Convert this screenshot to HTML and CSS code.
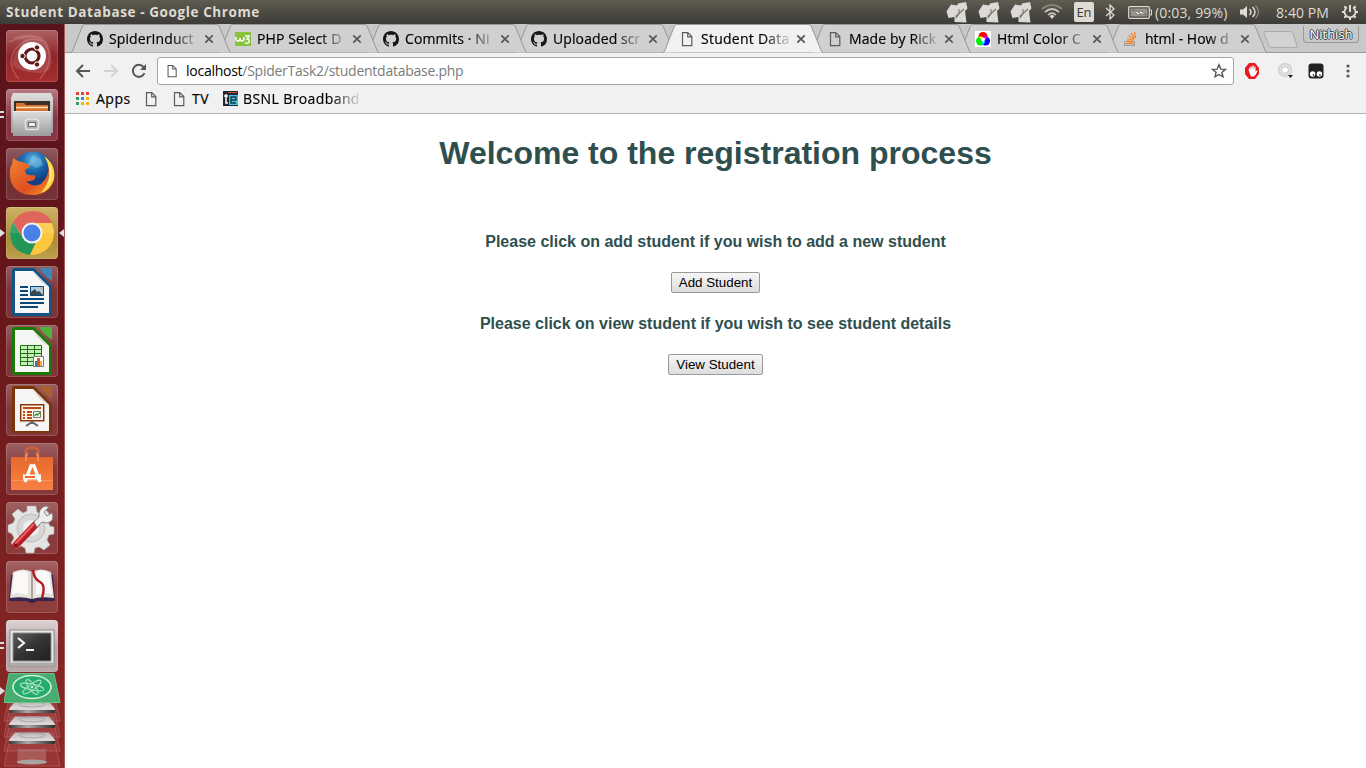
FILE: index.html
```html
<!DOCTYPE html>
<html lang="en">
<head>
<meta charset="utf-8">
<title>Student Database</title>
<link rel="stylesheet" href="styles.css">
</head>
<body>
<svg class="defs" width="0" height="0">
  <defs>
    <symbol id="github" viewBox="0 0 16 16"><path fill="#181616" d="M8 0C3.58 0 0 3.58 0 8c0 3.54 2.29 6.53 5.47 7.59.4.07.55-.17.55-.38 0-.19-.01-.82-.01-1.49-2.01.37-2.53-.49-2.69-.94-.09-.23-.48-.94-.82-1.13-.28-.15-.68-.52-.01-.53.63-.01 1.08.58 1.23.82.72 1.21 1.87.87 2.33.66.07-.52.28-.87.51-1.07-1.78-.2-3.64-.89-3.64-3.95 0-.87.31-1.59.82-2.15-.08-.2-.36-1.02.08-2.12 0 0 .67-.21 2.2.82.64-.18 1.32-.27 2-.27s1.36.09 2 .27c1.53-1.04 2.2-.82 2.2-.82.44 1.1.16 1.92.08 2.12.51.56.82 1.27.82 2.15 0 3.07-1.87 3.75-3.65 3.95.29.25.54.73.54 1.48 0 1.07-.01 1.93-.01 2.2 0 .21.15.46.55.38A8.01 8.01 0 0 0 16 8c0-4.42-3.58-8-8-8z"/></symbol>
    <symbol id="page" viewBox="0 0 16 16"><path fill="none" stroke="#5c5c5c" stroke-width="1.2" d="M3.500 1.600h5.300l4 4v9H3.500zM8.700 1.600v4.200h4"/></symbol>
    <symbol id="shape" viewBox="0 0 160 29"><path d="M0 28.500C1 28.500 1.500 27 2 26L11 3Q12 .500 13.500 .500H146Q147.500 .500 148.500 3L158 26Q159 28.500 160 28.500" stroke="#979797"/></symbol>
    <symbol id="close" viewBox="0 0 10 10"><path d="M1.300 1.300l7.400 7.400M8.700 1.300L1.300 8.700" stroke="#565656" stroke-width="1.700"/></symbol>
    <symbol id="box" viewBox="0 0 22 22"><path fill="#dcdad6" d="M5 3.500L11 4.500 12 2.500 20 1 21.500 7.500 19 10 20.500 21.500 8.500 21V16L2.500 17 .5 10.500Z"/><path d="M9.500 15.500L18 8M13 11.500V8M13.500 12L10 17" fill="none" stroke="#77736c" stroke-width="1.100"/></symbol>
    <linearGradient id="silver" x2="0" y2="1"><stop stop-color="#dedede"/><stop offset="1" stop-color="#9c9c9c"/></linearGradient>
    <linearGradient id="fox" x2="1" y2="1"><stop stop-color="#ef8332"/><stop offset=".6" stop-color="#e0501f"/><stop offset="1" stop-color="#fba02b"/></linearGradient>
    <radialGradient id="globe" cx=".5" cy=".2"><stop stop-color="#66b9e6"/><stop offset=".5" stop-color="#1f6db1"/><stop offset="1" stop-color="#123f85"/></radialGradient>
    <linearGradient id="bag" x2="0" y2="1"><stop stop-color="#e5682f"/><stop offset=".6" stop-color="#f47836"/><stop offset="1" stop-color="#f57f48"/></linearGradient>
    <linearGradient id="dark" x2="1" y2="1"><stop stop-color="#5d5d5d"/><stop offset=".5" stop-color="#333"/><stop offset="1" stop-color="#202020"/></linearGradient>
    <linearGradient id="disk" x2="0" y2="1"><stop stop-color="#b9b4b3"/><stop offset="1" stop-color="#dfdddc"/></linearGradient>
    <linearGradient id="edge"><stop stop-color="#3a3a3a"/><stop offset=".4" stop-color="#a8a8a8"/><stop offset="1" stop-color="#2e2e2e"/></linearGradient>
  </defs>
</svg>

<header class="panel">
  <span class="panel-title">Student Database - Google Chrome</span>
  <div class="indicators">
    <svg class="i-box" width="22" height="22"><use href="#box"/></svg>
    <svg class="i-box" width="22" height="22"><use href="#box"/></svg>
    <svg class="i-box" width="22" height="22"><use href="#box"/></svg>
    <svg class="i-wifi" width="22" height="16" viewBox="0 0 22 16" fill="none" stroke-width="1.700"><path d="M1 5Q11-3 21 5" stroke="#85827a"/><path d="M4 8Q11 2 18 8M7 11Q11 7 15 11" stroke="#c9c6be"/><path d="M8.500 12Q11 10 13.500 12L11 15z" fill="#dfdbd2" stroke="none"/></svg>
    <span class="i-lang">En</span>
    <svg class="i-bt" width="10" height="16" viewBox="0 0 10 16"><path d="M1 4l8 7-4 4V1l4 4-8 7" fill="none" stroke="#dfdbd2" stroke-width="1.300"/></svg>
    <svg class="i-bat" width="24" height="13" viewBox="0 0 24 13"><rect x=".7" y=".7" width="20.600" height="11.600" rx="1" fill="none" stroke="#dfdbd2" stroke-width="1.200"/><path d="M22 4h1.500v5H22" fill="none" stroke="#dfdbd2"/><path fill="#97948c" d="M2.500 2.500h17v8h-17z"/><path fill="#f2efe8" stroke="#47453f" stroke-width=".6" d="M4.500 4l7 2.500 1-2L18 9l-6.500-1.500-1 1.700z"/></svg>
    <span class="i-pct">(0:03, 99%)</span>
    <svg class="i-vol" width="21" height="16" viewBox="0 0 21 16"><path fill="#dfdbd2" d="M0 5.500h3l4-3.500v12l-4-3.500H0z"/><path d="M9.500 5q3 3 0 6M12.500 3q5 5 0 10" fill="none" stroke="#dfdbd2" stroke-width="1.500"/><path d="M15.500 1.500q6 6.500 0 13" fill="none" stroke="#8b8880" stroke-width="1.300"/></svg>
    <span class="i-time">8:40 PM</span>
    <svg class="i-gear" width="18" height="18" viewBox="0 0 18 18" fill="none" stroke="#dfdbd2"><path d="M6 4.200a5.500 5.500 0 1 0 6 0" stroke-width="1.800"/><path d="M9 2v7" stroke-width="2"/><path d="M1 9h2.500M14.500 9H17M3.300 3.300L5 5M13 5l1.700-1.700M3.300 14.700L5 13M13 13l1.700 1.700M9 14.500V17" stroke-width="2"/></svg>
  </div>
</header>

<div class="desktop">
<nav class="launcher">
  <svg class="tile dash" viewBox="0 0 52 52"><path d="M3 12Q28 0 39 13 50 30 34 49M13 49Q-2 32 12 16 24 4 40 13" fill="none" stroke="#e4aaa5" stroke-opacity=".3" stroke-width="1.500"/><path d="M4 8Q38-4 44 20T32 43 8 37 18 10" fill="#d89993" opacity=".25"/><circle cx="26" cy="26" r="14" fill="#fff"/><circle cx="26" cy="26" r="7" fill="none" stroke="#621817" stroke-width="3.200"/><g fill="#621817" stroke="#fff"><circle cx="16.500" cy="26" r="2.700"/><circle cx="31" cy="17.500" r="2.700"/><circle cx="31" cy="34.500" r="2.700"/></g></svg>
  <div class="slot"><svg class="tile files" viewBox="0 0 52 52"><path d="M7 4h38l2 5v35H5V9z" fill="url(#silver)"/><path fill="#3c3028" d="M8 12h36v10H8z"/><path fill="#d8702f" d="M10 14h8l2 2h22v6H10z"/><path d="M10 18.500h32" stroke="#ffe1b4" stroke-width="1.500"/><path d="M7 22h38v25H7z" fill="url(#silver)"/><path d="M7 22.500h38" stroke="#eee"/><rect x="19.500" y="30.500" width="13" height="10" rx="2" fill="#b0b0b0" stroke="#e5e5e5" stroke-width="1.500"/><path d="M22.500 33.500h7v4h-7z" fill="#f2f2f2" stroke="#666"/></svg><i class="dots"></i></div>
  <svg class="tile ff" viewBox="0 0 52 52"><circle cx="27" cy="24" r="20.500" fill="url(#globe)"/><path fill="#8ccbea" opacity=".45" d="M27 7l8 4 2 6-6 3-6-3-4 2z"/><path fill="url(#fox)" d="M7 10Q11 13 16 14L22 16 24 19 19 22 20 26Q24 28 28 27 31 29 28 32 23 34 20 33 26 40 35 36 43 29 43 16 50 23 48 32 44 45 29 47 11 48 5 34 2 23 6 16z"/><path fill="#ffda45" d="M38 8Q50 16 48 31 44 42 35 45 45 33 43 22 42 14 38 8z"/><path fill="#ffef9a" d="M43 16q4 8 2 16l-3 5q3-10 1-21z"/></svg>
  <div class="slot"><svg class="tile chrome" viewBox="0 0 52 52"><circle cx="26" cy="26" r="22" fill="#fbc73d"/><path fill="#dc5044" d="M7 15Q14 4 26 4 40 4 46 16H26L17 31z"/><path fill="#21975a" d="M7 15L17 31Q22 37 30 35L24 48Q5 45 4 27 4 20 7 15z"/><path fill="#fff" opacity=".13" d="M4 26a22 22 0 0 1 44 0z"/><circle cx="26" cy="26" r="10.500" fill="#f4f4f1"/><circle cx="26" cy="26" r="8.500" fill="#4a80e8"/></svg><i class="run-left"></i><i class="run-right"></i></div>
  <svg class="tile" viewBox="0 0 52 52"><path fill="#125488" d="M8 2Q6 2 6 5v42q0 3 3 3h34q3 0 3-3V20L28 2z"/><path fill="#3c86ba" d="M33 2h13v13Q38 10 33 2z"/><path fill="#f7f7f7" d="M9 5h18l16 16v26H9z"/><path fill="#cfd4d8" d="M27 5l16 16Q34 17 27 5z"/><path d="M14 21h8M14 25h8M14 29h8M14 33h24M14 37h24M14 41h18" stroke="#0c4776" stroke-width="2"/><path fill="#a9d0e8" stroke="#0c4776" d="M24.500 20.500h13v9h-13z"/><path fill="#40464a" d="M25 29v-3l4-3 2 3 2-1 4 4z"/><circle cx="35" cy="22.500" r="1.200" fill="#e9b04a"/></svg>
  <svg class="tile" viewBox="0 0 52 52"><path fill="#1a7a08" d="M8 2Q6 2 6 5v42q0 3 3 3h34q3 0 3-3V20L28 2z"/><path fill="#52b03c" d="M33 2h13v13Q38 10 33 2z"/><path fill="#f5f7f4" d="M9 5h18l16 16v26H9z"/><path fill="#cbd4c8" d="M27 5l16 16Q34 17 27 5z"/><path fill="#caecbb" stroke="#16740c" d="M14.500 20.500h21v20h-21zM21.500 20v20M28.500 20v20M14 24.500h22M14 28.500h22M14 32.500h22M14 36.500h22"/><path fill="#fff" stroke="#777" d="M27.500 31.500h10v10h-10z"/><path fill="#377aa6" d="M29 36h2v5h-2z"/><path fill="#df5c18" d="M31 33h3v8h-3z"/><path fill="#e8b43a" d="M34 36h2v5h-2z"/></svg>
  <svg class="tile" viewBox="0 0 52 52"><path fill="#7b3509" d="M8 2Q6 2 6 5v41q0 3 3 3h34q3 0 3-3V20L28 2z"/><path fill="#a8602e" d="M33 2h13v13Q38 10 33 2z"/><path fill="#f7f5f3" d="M9 5h18l16 16v26H9z"/><path fill="#d5cfca" d="M27 5l16 16Q34 17 27 5z"/><path fill="#fff4e9" stroke="#8b360c" stroke-width="1.500" d="M14.700 20.700h23v16h-23z"/><path d="M17 24h18M17 28h2M17 31h2M17 34h2M21 28h5M21 31h5M21 34h5" stroke="#be4a16" stroke-width="2"/><path fill="#edf8e9" stroke="#777" d="M27.500 27.500h7v6h-7z"/><path d="M28.500 32l2-2 1 1 3-3" fill="none" stroke="#39933c" stroke-width="1.300"/><path d="M20 42l6-4 6 4M26 37v3" fill="none" stroke="#666" stroke-width="2"/></svg>
  <svg class="tile" viewBox="0 0 52 52"><path d="M20 16V8q0-3 3-3h6q3 0 3 3v8" fill="none" stroke="#c9603f" stroke-width="2.400"/><path fill="url(#bag)" d="M5 14h42v33H5z"/><path d="M5 37.500h42" stroke="#f99566"/><path d="M20 18v-4q0-3 2-3M32 18v-4q0-3-2-3" fill="none" stroke="#f08c60" stroke-width="2.200"/><path d="M19 39l6-16h3l6 16" fill="none" stroke="#fff" stroke-width="3.300"/><path d="M17 34h18" stroke="#fff" stroke-width="5"/><path d="M19 34h10" stroke="#ed6a2b" stroke-width="2"/></svg>
  <svg class="tile" viewBox="0 0 52 52"><path fill="#e4e4e2" stroke="#aaa" stroke-width=".6" d="M21 4h9l1 6 4 2 5-4 6 7-4 5 2 4 4 1v7l-5 1-2 5 3 5-6 5-5-3-4 1-1 5h-8l-1-5-4-2-5 3-5-6 3-5-2-4-4-2v-7l5-2 2-4-3-5 6-5 5 4 4-2z"/><circle cx="25" cy="26" r="14" fill="#d6d6d4" stroke="#bbb"/><circle cx="25" cy="26" r="8" fill="#eee"/><path d="M10 43L30 22" stroke="#b51f25" stroke-width="7" stroke-linecap="round"/><path d="M9 42L28 22" stroke="#ee6264" stroke-width="2"/><circle cx="10" cy="43" r="1.500" fill="#701014"/><path fill="#eee" stroke="#888" d="M28 20l5-5q-1-8 6-11l4 1-5 5 3 4 5-3q3 8-5 10l-5-1-5 5z"/></svg>
  <svg class="tile" viewBox="0 0 52 52"><path fill="#37234e" d="M5 14L3 40h18q5 4 10 0h18l-2-26z"/><path fill="#e5e2dc" d="M7 11q11-5 19 0 8-5 19 0l3 26q-14-2-22 1-10-3-22-1z"/><path d="M26 11v27" stroke="#a9a59d" stroke-width="2"/><path fill="#fff" opacity=".8" d="M8 12q10-4 14 0v22q-9-3-16-1zM30 11q8-4 13 1l3 21q-8-2-16 1z"/><path d="M27 9q1 9 7 12t2 16" stroke="#b51c25" stroke-width="2.400" fill="none"/></svg>
  <div class="slot"><svg class="tile term" viewBox="0 0 52 52"><path fill="#ebe9e7" stroke="#8c8787" d="M4 10h44v36H4z"/><path fill="url(#dark)" stroke="#888" d="M7 13h38v28H7z"/><path d="M12 18l6 5-6 5M20 30h8" fill="none" stroke="#f3f3f3" stroke-width="2.200"/><path d="M5 44h42" stroke="#aaa" stroke-width="3"/></svg><i class="dots"></i></div>
  <div class="slot stack"><svg width="60" height="96" viewBox="0 0 60 96">
    <g fill="#b7555b" fill-opacity=".28" stroke="#bd7676" stroke-opacity=".5"><path d="M7 60H49L56 93H0z"/><path d="M7 44H49L56 78H0z"/><path d="M7 29H49L56 64H0z"/><path d="M7 17H49L56 48H0z"/></g>
    <path fill="#bc8784" opacity=".45" d="M14 76H42V90H13z"/><ellipse cx="28" cy="89" rx="15" ry="2.500" fill="#a9a3a1"/>
    <g id="drive"><path fill="url(#disk)" d="M11 28.500H45L51 36H5z"/><ellipse cx="28" cy="31.500" rx="13" ry="2.500" fill="none" stroke="#aaa6a5"/><path d="M5 36.700H51" stroke="#f0f0f0"/><path fill="url(#edge)" d="M5 37h46v3H5z"/></g>
    <use href="#drive" y="15"/><use href="#drive" y="31"/>
    <path fill="#48ac6f" stroke="#66c58b" d="M5 .500H50L56 29.500H0z"/><ellipse cx="28" cy="14" rx="19" ry="11.500" fill="#24ad68" stroke="#d4eee0" stroke-width="1.500"/><g fill="none" stroke="#a9dfc2"><ellipse cx="28" cy="14" rx="12" ry="3" transform="rotate(12 28 14)"/><ellipse cx="28" cy="14" rx="9" ry="3" transform="rotate(52 28 14)"/><ellipse cx="28" cy="14" rx="11" ry="3" transform="rotate(-35 28 14)"/></g><circle cx="28" cy="14" r="1.300" fill="#d4eee0"/>
  </svg><i class="run-left"></i></div>
</nav>

<main class="browser">
  <div class="tabs">
    <div class="tab"><svg class="shape"><use href="#shape"/></svg><svg class="fav"><use href="#github"/></svg><span class="name">SpiderInduct</span><svg class="x"><use href="#close"/></svg></div>
    <div class="tab"><svg class="shape"><use href="#shape"/></svg><svg class="fav" viewBox="0 0 16 16"><path fill="#86c440" d="M0 1h16v14H0z"/><path d="M1 6v2q0 2 2 2t2-3q0 3 2 3t2-3V6M10 5h4l-2 3q3 0 2 3-1 2-4 1" fill="none" stroke="#fff" stroke-width="1.500"/></svg><span class="name">PHP Select D</span><svg class="x"><use href="#close"/></svg></div>
    <div class="tab"><svg class="shape"><use href="#shape"/></svg><svg class="fav"><use href="#github"/></svg><span class="name">Commits · Ni</span><svg class="x"><use href="#close"/></svg></div>
    <div class="tab"><svg class="shape"><use href="#shape"/></svg><svg class="fav"><use href="#github"/></svg><span class="name">Uploaded scr</span><svg class="x"><use href="#close"/></svg></div>
    <div class="tab active"><svg class="shape"><use href="#shape"/></svg><svg class="fav"><use href="#page"/></svg><span class="name wide">Student Data</span><svg class="x"><use href="#close"/></svg></div>
    <div class="tab"><svg class="shape"><use href="#shape"/></svg><svg class="fav"><use href="#page"/></svg><span class="name">Made by Rick</span><svg class="x"><use href="#close"/></svg></div>
    <div class="tab"><svg class="shape"><use href="#shape"/></svg><svg class="fav" viewBox="0 0 16 16"><path fill="#fff" d="M0 0h16v16H0z"/><circle cx="8" cy="5.500" r="4.500" fill="red"/><circle cx="5.500" cy="10" r="4.500" fill="#0e0"/><circle cx="10.500" cy="10" r="4.500" fill="#00f"/><path fill="#ff0" d="M3.600 6A4.500 4.500 0 0 1 8 6.500L7 9z"/><path fill="#f0f" d="M8 6.500A4.500 4.500 0 0 1 12.400 6L10 10z"/><path fill="#0ff" d="M8 8l2 3-2 3-2-3z"/><circle cx="8" cy="8.500" r="2" fill="#fff"/></svg><span class="name">Html Color C</span><svg class="x"><use href="#close"/></svg></div>
    <div class="tab"><svg class="shape"><use href="#shape"/></svg><svg class="fav" viewBox="0 0 16 16"><path d="M1.700 10v4.300h9.600V10" fill="none" stroke="#9b9b9b" stroke-width="1.300"/><path d="M3 12.300h7M3.300 10l6.800.8M4 7.500l6.500 2M5.500 4.500l5.500 4M8 2l3.700 5.500M11.500 1l1 6" stroke="#f48024" stroke-width="1.300"/></svg><span class="name how">html - How d</span><svg class="x"><use href="#close"/></svg></div>
    <svg class="newtab" width="36" height="18" viewBox="0 0 36 18"><path d="M3 .500H27q2 0 3 2l4 12q1 2-1 2H9q-2 0-3-2l-5-12q-1-2 2-2z" fill="#d2d2d2" stroke="#aaa"/></svg>
    <span class="user">Nithish</span>
  </div>
  <div class="toolbar">
    <svg class="nav" viewBox="0 0 16 16"><path d="M15 8H2M8 2L2 8l6 6" fill="none" stroke="#565656" stroke-width="2"/></svg>
    <svg class="nav" viewBox="0 0 16 16"><path d="M1 8h13M8 2l6 6-6 6" fill="none" stroke="#d2d2d2" stroke-width="2"/></svg>
    <svg class="nav" viewBox="0 0 16 16"><path d="M13.500 10A6 6 0 1 1 12.500 4" fill="none" stroke="#565656" stroke-width="2"/><path fill="#565656" d="M15 1v6H9z"/></svg>
    <div class="omnibox"><svg width="14" height="14"><use href="#page"/></svg><span class="url"><b>localhost</b>/SpiderTask2/studentdatabase.php</span><svg class="star" width="16" height="16" viewBox="0 0 16 16"><path d="M8 1.800l1.800 4.300 4.600.3-3.500 3 1.100 4.500L8 11.500l-4 2.400 1.100-4.500-3.500-3 4.600-.3z" fill="none" stroke="#555" stroke-width="1.400"/></svg></div>
    <div class="extensions">
      <svg width="16" height="16" viewBox="0 0 16 16"><path fill="#e8191f" d="M5 0h6l4 5v6l-4 5H5l-4-5V5z"/><path fill="#fff" d="M4.500 7l1-3 .8 3V3.500h1.200l.5 3 .3-4h1.200l.3 4 .7-3h1v5l1.500-1.300.7.500-2 4-2 1.800H7z"/></svg>
      <svg width="18" height="16" viewBox="0 0 18 16"><circle cx="9" cy="7" r="6" fill="#f7f7f7" stroke="#d6d6d6" stroke-width="2.500"/><circle cx="9" cy="7" r="3.500" fill="#fff" stroke="#bbb"/><path fill="#222" d="M12 12h5l-2.500 3z"/></svg>
      <svg class="monkey" width="16" height="16" viewBox="0 0 16 16"><rect x=".5" y=".5" width="15" height="15" rx="3" fill="#222"/><circle cx="4.600" cy="11" r="2.700" fill="#fff"/><circle cx="11.400" cy="11" r="2.700" fill="#fff"/><circle cx="5.500" cy="12" r=".8"/><circle cx="12" cy="12" r=".8"/></svg>
      <svg class="more" width="4" height="14" viewBox="0 0 4 14" fill="#565656"><circle cx="2" cy="2" r="1.600"/><circle cx="2" cy="7" r="1.600"/><circle cx="2" cy="12" r="1.600"/></svg>
    </div>
  </div>
  <div class="bookmarks">
    <svg width="13" height="13" viewBox="0 0 13 13"><path fill="#ea4335" d="M0 0h3v3H0zM5 0h3v3H5zM10 0h3v3h-3z"/><path fill="#34a060" d="M0 5h3v3H0zM0 10h3v3H0z"/><path fill="#4285e8" d="M5 5h3v3H5z"/><path fill="#f4b400" d="M10 5h3v3h-3zM5 10h3v3H5zM10 10h3v3h-3z"/></svg>
    <span class="apps">Apps</span>
    <svg class="bm-page" width="16" height="16"><use href="#page"/></svg>
    <svg class="bm-page" width="16" height="16"><use href="#page"/></svg>
    <span class="tv">TV</span>
    <svg class="bm-te" width="15" height="15" viewBox="0 0 15 15"><path fill="#202a30" d="M0 0h15v15H0z"/><path fill="#d44" d="M5 1h9v1H5z"/><path fill="#48c4ec" d="M6 4h9v10H6z"/><path d="M1 5h4M3 3v9h2" stroke="#fff" stroke-width="1.500" fill="none"/><path d="M8 9h5V6H8v6h5" fill="none" stroke="#17333e" stroke-width="1.300"/></svg>
    <span class="bsnl">BSNL Broadband</span>
  </div>
  <section class="content">
    <h1>Welcome to the registration process</h1>
    <h4>Please click on add student if you wish to add a new student</h4>
    <button>Add Student</button>
    <h4>Please click on view student if you wish to see student details</h4>
    <button>View Student</button>
  </section>
</main>
</div>
</body>
</html>
```

FILE: styles.css
```css
* { box-sizing: border-box; }
body { margin: 0; width: 1366px; height: 768px; overflow: hidden; font-family: "Open Sans", "Noto Sans", sans-serif; font-size: 14px; display: flex; flex-direction: column; }
svg { display: block; flex: none; }
span { white-space: nowrap; }
.defs { position: absolute; }
.panel { height: 24px; flex: none; background: linear-gradient(#5e5b50, #3c3b37); color: #dfdbd2; display: flex; align-items: center; justify-content: space-between; padding: 0 7px 0 6px; }
.panel-title { font-weight: 700; font-size: 13.5px; letter-spacing: 0.6px; }
.indicators { display: flex; align-items: center; }
.i-box { margin-right: 10px; }
.i-wifi { margin: 0 11px 0 -1px; }
.i-lang { width: 20px; height: 20px; background: #dfdbd2; color: #3c3b37; border-radius: 2px; text-align: center; line-height: 20px; font-size: 13px; }
.i-bt { margin: 0 13px 0 11px; }
.i-pct { width: 73px; margin: 0 12px 0 3px; letter-spacing: 0.15px; }
.i-time { width: 52px; margin: 0 13px 0 15px; letter-spacing: 0.1px; }
.desktop { display: flex; height: 744px; }
.launcher { width: 65px; background: linear-gradient(#57141a, #67161b 35%, #7d2222 75%, #8d2a27); border-right: 1px solid #a35b5b; display: flex; flex-direction: column; align-items: flex-start; gap: 7px; padding: 6px 0 0 6px; overflow: hidden; flex: none; }
.tile { width: 52px; height: 52px; border-radius: 4px; background: linear-gradient(rgba(255,255,255,.3), rgba(255,255,255,.12) 50%, rgba(255,255,255,.12)); box-shadow: inset 0 0 0 1px rgba(255,255,255,.15); }
.dash { background: linear-gradient(#ad6262, #92252a 50%, #a62e2d); }
.files { background: linear-gradient(#b77b83, #853442 55%, #893546); }
.chrome { background: linear-gradient(#cdb367, #ad8b38 60%, #bda04d); }
.term { background: linear-gradient(#ddd3d4, #b5a3a6 55%, #b7a5a8); }
.slot { position: relative; flex: none; }
.run-left, .run-right { position: absolute; top: 22px; border: 4px solid transparent; }
.run-left { left: -6px; border-left: 5px solid #ddd; border-right: 0; }
.run-right { right: -6px; border-right: 5px solid #ddd; border-left: 0; }
.dots { position: absolute; left: -6px; top: 22px; width: 4px; height: 7px; border-top: 2px solid #ddd; border-bottom: 2px solid #ddd; }
.stack { margin: -6px 0 0 -2px; }
.stack .run-left { top: 14px; left: -4px; }
.browser { flex: 1; min-width: 0; display: flex; flex-direction: column; background: #fff; }
.tabs { height: 29px; flex: none; display: flex; background: #c8c8c8; border-bottom: 1px solid #979797; padding-left: 6px; isolation: isolate; }
.tab { position: relative; width: 160px; height: 29px; margin-right: -12px; flex: none; display: flex; align-items: center; padding: 1px 17px 0 16px; fill: #d0d0d0; }
.tab:nth-child(1) { z-index: 8; }
.tab:nth-child(2) { z-index: 7; }
.tab:nth-child(3) { z-index: 6; }
.tab:nth-child(4) { z-index: 5; }
.tab:nth-child(6) { z-index: 3; }
.tab:nth-child(7) { z-index: 2; }
.tab:nth-child(8) { z-index: 1; }
.tab.active { z-index: 9; fill: #f1f1f1; }
.shape { position: absolute; left: 0; top: 0; width: 160px; height: 29px; z-index: -1; }
.fav { width: 16px; height: 16px; }
.name { width: 90px; margin: -2px 0 0 6px; color: #000; letter-spacing: 0.1px; -webkit-text-stroke: 0.2px #000; -webkit-mask-image: linear-gradient(90deg, #000 62px, transparent 92px); mask-image: linear-gradient(90deg, #000 62px, transparent 92px); }
.how { letter-spacing: 0; }
.wide { letter-spacing: 0.25px; }
.x { width: 10px; height: 10px; margin: -1px 0 0 5px; }
.newtab { margin: 7px 0 0 8px; }
.user { margin: 2px 7px 0 auto; width: 56px; height: 17px; border: 1px solid #999; border-top: 0; border-radius: 0 0 4px 4px; color: #fff; text-align: center; font-size: 13px; line-height: 17px; text-shadow: 0 1px #444, 1px 0 #444, -1px 0 #444, 0 -1px #444; }
.toolbar { height: 35px; flex: none; background: #f1f1f1; display: flex; align-items: center; gap: 12px; padding: 1px 13px 0 10px; }
.nav { width: 16px; height: 16px; }
.omnibox { width: 1077px; height: 28px; margin-left: -2px; background: #fff; border: 1px solid #a5a5a5; border-radius: 3px; display: flex; align-items: center; padding: 0 6px 0 7px; }
.url { margin: -2px 0 0 7px; color: #7b7b7b; letter-spacing: -0.26px; }
.url b { color: #000; font-weight: 400; }
.star { margin-left: auto; }
.extensions { display: flex; align-items: center; margin-left: -2px; gap: 16px; }
.monkey { margin-left: -2px; }
.more { margin-left: 6px; }
.bookmarks { height: 26px; flex: none; background: #f1f1f1; border-bottom: 1px solid #b4b4b4; display: flex; align-items: center; padding: 0 0 4px 11px; color: #000; -webkit-text-stroke: 0.2px #000; }
.apps { margin-left: 7px; width: 35px; letter-spacing: 0.5px; }
.bm-page { margin-left: 12px; }
.tv { margin-left: 5px; width: 19px; letter-spacing: 0.5px; }
.bm-te { margin-left: 12px; }
.bsnl { width: 120px; margin-left: 5px; letter-spacing: 0.4px; -webkit-mask-image: linear-gradient(90deg, #000 88px, transparent 119px); mask-image: linear-gradient(90deg, #000 88px, transparent 119px); }
.content { flex: 1; display: flex; flex-direction: column; align-items: center; color: #2f4f4f; font-family: "Liberation Sans", Arial, sans-serif; padding-top: 21px; }
h1 { font-size: 32px; line-height: 37px; margin: 0 0 61px; }
h4 { font-size: 16px; line-height: 18px; margin: 0 0 21px; }
button { height: 21px; font: 13.333px "Liberation Sans", Arial, sans-serif; color: #000; padding: 0 7px; border: 1px solid #999; border-radius: 2px; background: linear-gradient(#f6f6f6, #ddd); margin-bottom: 22px; }
```
